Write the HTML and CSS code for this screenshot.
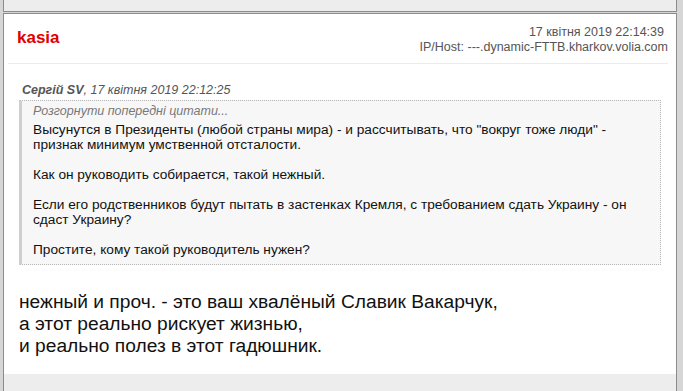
FILE: index.html
```html
<!DOCTYPE html>
<html lang="uk">
<head>
  <meta charset="UTF-8">
  <title>Форум</title>
  <link rel="stylesheet" href="styles.css">
</head>
<body>
  <div class="thread">
    <div class="post prev">
      <div class="post-foot"></div>
    </div>
    <div class="post">
      <div class="post-head">
        <div class="author">kasia</div>
        <div class="meta">
          <div class="date">17 квітня 2019 22:14:39</div>
          <div>IP/Host: ---.dynamic-FTTB.kharkov.volia.com</div>
        </div>
      </div>
      <div class="post-body">
        <div class="quote-title"><b>Сергій SV</b>, 17 квітня 2019 22:12:25</div>
        <div class="quote">
          <div class="quote-more">Розгорнути попередні цитати...</div>
          <p>Высунутся в Президенты (любой страны мира) - и рассчитывать, что "вокруг тоже люди" - признак минимум умственной отсталости.</p>
          <p>Как он руководить собирается, такой нежный.</p>
          <p>Если его родственников будут пытать в застенках Кремля, с требованием сдать Украину - он сдаст Украину?</p>
          <p>Простите, кому такой руководитель нужен?</p>
        </div>
        <div class="text">
          нежный и проч. - это ваш хвалёный Славик Вакарчук,<br>
          а этот реально рискует жизнью,<br>
          и реально полез в этот гадюшник.
        </div>
      </div>
      <div class="post-foot"></div>
    </div>
  </div>
</body>
</html>
```
FILE: styles.css
```css
body { margin: 0; background: #d6d6d6; font-family: "Liberation Sans", Arial, sans-serif; color: #222; }
.thread { margin-left: 3px; width: 674px; }
.post { background: #fff; border: 1px solid #8c8c8c; border-bottom: none; margin-bottom: 1px; }
.post.prev { border-top: none; border-bottom: 1px solid #8c8c8c; }
.post.prev .post-foot { height: 11px; }
.post-foot { background: #ededed; height: 30px; }
.post-head { display: flex; justify-content: space-between; align-items: flex-start; margin: 0 8px 0 4px; padding: 11px 0 8px 9px; border-bottom: 1px solid #ececec; }
.author { color: #e00000; font-weight: bold; font-size: 17px; line-height: 20px; margin-top: 3px; }
.meta { text-align: right; color: #555; font-size: 12.5px; line-height: 15px; }
.meta .date { padding-right: 4px; }
.post-body { padding: 19px 15px 17px 15px; }
.quote-title { color: #555; font-size: 12.5px; font-style: italic; padding-left: 3px; line-height: 15px; }
.quote { background: #f7f7f7; border: 1px dotted #b5b5b5; border-left: 3px solid #cfcfcf; margin-top: 2px; padding: 3px 10px 7px 11px; font-size: 13.7px; line-height: 15px; color: #111; }
.quote-more { color: #777; font-style: italic; font-size: 12.5px; margin-bottom: 3px; }
.quote p { margin: 0 0 15px; }
.quote p:last-child { margin-bottom: 0; }
.text { margin-top: 26px; font-size: 19.2px; line-height: 22px; color: #111; }
```
